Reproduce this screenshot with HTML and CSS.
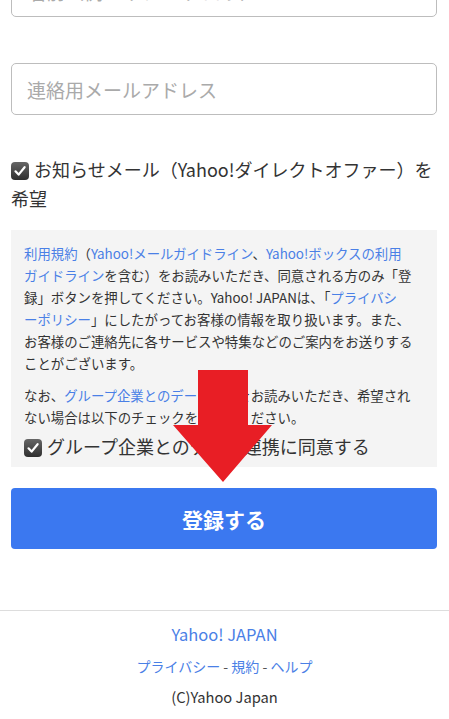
FILE: index.html
```html
<!DOCTYPE html>
<html lang="ja">
<head>
    <meta charset="UTF-8">
    <meta name="viewport" content="width=device-width, initial-scale=1.0">
    <title>Yahoo! JAPAN ID登録</title>
    <link rel="stylesheet" href="styles.css">
</head>
<body>
    <div class="page">
        <!-- 入力欄 -->
        <input type="text" class="field field-top" placeholder="名前（例：ヤフー タロウ）">
        <input type="email" class="field field-mail" placeholder="連絡用メールアドレス">

        <!-- お知らせメール -->
        <label class="check-line">
            <span class="check-box"><svg viewBox="0 0 18 18" width="18" height="18"><path d="M4.5 9.3 L7.6 12.6 L13.6 5.2" fill="none" stroke="#fff" stroke-width="2.2" stroke-linecap="round" stroke-linejoin="round"/></svg></span>お知らせメール（Yahoo!ダイレクトオファー）を<br>希望
        </label>

        <!-- 規約 -->
        <div class="terms">
            <p><a href="#">利用規約</a>（<a href="#">Yahoo!メールガイドライン</a>、<a href="#">Yahoo!ボックスの利用<br>ガイドライン</a>を含む）をお読みいただき、同意される方のみ「登<br>録」ボタンを押してください。Yahoo! JAPANは、「<a href="#">プライバシ<br>ーポリシー</a>」にしたがってお客様の情報を取り扱います。また、<br>お客様のご連絡先に各サービスや特集などのご案内をお送りする<br>ことがございます。</p>
            <p>なお、<a href="#">グループ企業とのデータ連携</a>をお読みいただき、希望され<br>ない場合は以下のチェックを外してください。</p>
            <label class="check-line check-group">
                <span class="check-box"><svg viewBox="0 0 18 18" width="18" height="18"><path d="M4.5 9.3 L7.6 12.6 L13.6 5.2" fill="none" stroke="#fff" stroke-width="2.2" stroke-linecap="round" stroke-linejoin="round"/></svg></span>グループ企業とのデータ連携に同意する
            </label>
        </div>

        <button class="submit">登録する</button>

        <!-- 矢印 -->
        <svg class="arrow" viewBox="0 0 100 113" width="100" height="113">
            <polygon points="25,0 75,0 75,55 99,55 50,112 0,55 25,55" fill="#e81e25"/>
        </svg>
    </div>

    <footer class="footer">
        <a href="#" class="footer-logo">Yahoo! JAPAN</a>
        <div class="footer-links">
            <a href="#">プライバシー</a> - <a href="#">規約</a> - <a href="#">ヘルプ</a>
        </div>
        <div class="copy">(C)Yahoo Japan</div>
    </footer>
</body>
</html>
```

FILE: styles.css
```css
body {
    font-family: "Noto Sans CJK JP", "Noto Sans", sans-serif;
    color: #333;
    background-color: #fff;
    margin: 0;
    overflow: hidden;
}

a {
    color: #4a80e6;
    text-decoration: none;
}

.page {
    display: flow-root;
    position: relative;
    padding: 0 12px 0 11px;
}

.field {
    display: block;
    box-sizing: border-box;
    width: 100%;
    height: 52px;
    padding: 0 15px;
    border: 1px solid #bdbdbd;
    border-radius: 5px;
    font-family: inherit;
    font-size: 19px;
    color: #333;
    background: #fff;
}

.field::placeholder {
    color: #aaa;
}

.field-top {
    margin-top: -35px;
}

.field-mail {
    margin-top: 46px;
}

.check-line {
    display: block;
    margin-top: 40px;
    font-size: 18px;
    line-height: 29px;
    white-space: nowrap;
}

.check-box {
    display: inline-flex;
    align-items: center;
    justify-content: center;
    width: 18px;
    height: 18px;
    margin-right: 5px;
    vertical-align: -3px;
    border-radius: 4px;
    background: linear-gradient(#666, #2f2f2f);
}

.terms {
    margin-top: 17px;
    padding: 12px 6px 7px 13px;
    background-color: #f4f4f4;
    font-size: 13.4px;
    line-height: 22px;
    white-space: nowrap;
}

.terms p {
    margin: 0 0 10px;
}

.terms p:last-of-type {
    margin-bottom: 4px;
}

.check-group {
    margin-top: 0;
    font-size: 18px;
    line-height: 28px;
}

.submit {
    display: block;
    width: 100%;
    height: 61px;
    margin-top: 21px;
    border: none;
    border-radius: 4px;
    background-color: #3b78f0;
    color: #fff;
    font-family: inherit;
    font-size: 21px;
    font-weight: bold;
}

.arrow {
    position: absolute;
    left: 173px;
    top: 370px;
}

.footer {
    margin-top: 61px;
    border-top: 1px solid #ddd;
    text-align: center;
}

.footer-logo {
    display: block;
    margin-top: 12px;
    font-size: 16.5px;
    line-height: 22px;
}

.footer-links {
    margin-top: 10px;
    font-size: 14px;
    line-height: 22px;
    color: #555;
}

.copy {
    margin-top: 9px;
    font-size: 14.7px;
    line-height: 22px;
}
```
